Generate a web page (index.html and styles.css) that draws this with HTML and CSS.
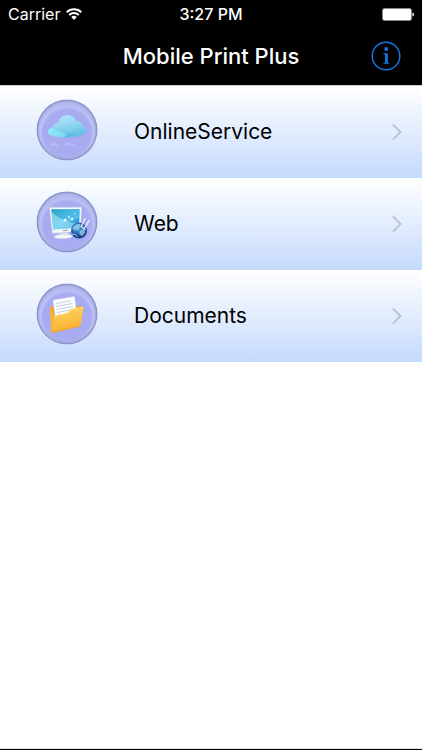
FILE: index.html
```html
<!DOCTYPE html>
<html lang="en">
<head>
<meta charset="utf-8">
<meta name="viewport" content="width=device-width, initial-scale=1">
<title>Mobile Print Plus</title>
<link rel="stylesheet" href="styles.css">
</head>
<body>
<header class="header">
  <div class="status">
    <span class="carrier">Carrier
      <svg class="wifi" width="16" height="12" viewBox="0 0 16 12" aria-hidden="true">
        <g fill="none" stroke="#fff" stroke-width="1.9">
          <path d="M.7 4.3a10.4 10.4 0 0 1 14.6 0"/>
          <path d="M3.2 7a6.8 6.8 0 0 1 9.6 0"/>
        </g>
        <path d="M8 12 5.2 9.1a4 4 0 0 1 5.6 0z" fill="#fff"/>
      </svg>
    </span>
    <time class="clock">3:27 PM</time>
    <svg class="battery" width="32" height="13" viewBox="0 0 32 13" role="img" aria-label="Battery full">
      <rect x=".5" y=".5" width="29" height="12" rx="2" fill="#fff" stroke="#888"/>
      <path d="M30.5 4.5c2 .5 2 3.500 0 4z" fill="#fff"/>
    </svg>
  </div>
  <div class="navbar">
    <h1 class="title">Mobile Print Plus</h1>
    <button class="info" type="button" aria-label="Information">
      <svg width="30" height="30" viewBox="0 0 30 30" aria-hidden="true">
        <circle cx="15" cy="15" r="13.800" fill="none" stroke="#1677e6" stroke-width="1.400"/>
        <circle cx="15.200" cy="8" r="1.900" fill="#1677e6"/>
        <path d="M12.300 12.200h4.500v9.200l1.500.5v.9h-6v-.9l1.800-.5v-7.800l-1.800-.5z" fill="#1677e6"/>
      </svg>
    </button>
  </div>
</header>

<svg class="defs" width="0" height="0" aria-hidden="true">
  <defs>
    <radialGradient id="rim">
      <stop offset=".8" stop-color="#a8abf0"/>
      <stop offset=".87" stop-color="#abb0ee"/>
      <stop offset=".93" stop-color="#9da4df"/>
      <stop offset=".98" stop-color="#8991c8"/>
      <stop offset="1" stop-color="#a3add6"/>
    </radialGradient>
    <radialGradient id="sheen" cy=".56">
      <stop offset=".82" stop-color="#d8e2fd" stop-opacity="0"/>
      <stop offset=".93" stop-color="#d8e2fd" stop-opacity=".4"/>
      <stop offset="1" stop-color="#d8e2fd" stop-opacity=".2"/>
    </radialGradient>
    <linearGradient id="cloud" x2=".3" y2="1">
      <stop offset="0" stop-color="#b8e6fa"/>
      <stop offset=".5" stop-color="#94d9f4"/>
      <stop offset="1" stop-color="#63bee5"/>
    </linearGradient>
    <linearGradient id="cloud-lit">
      <stop offset="0" stop-color="#8cecfa"/>
      <stop offset="1" stop-color="#7bcff0"/>
    </linearGradient>
    <linearGradient id="screen" x2="1" y2="1">
      <stop offset="0" stop-color="#2b9fbd"/>
      <stop offset=".5" stop-color="#4dbce8"/>
      <stop offset="1" stop-color="#1683d4"/>
    </linearGradient>
    <radialGradient id="globe" cx=".4" cy=".35">
      <stop offset="0" stop-color="#a5dcf7"/>
      <stop offset=".4" stop-color="#3d8bcd"/>
      <stop offset="1" stop-color="#153f88"/>
    </radialGradient>
    <linearGradient id="folder" x2=".3" y2="1">
      <stop offset="0" stop-color="#ffd866"/>
      <stop offset=".55" stop-color="#fdc248"/>
      <stop offset="1" stop-color="#f8ae30"/>
    </linearGradient>
    <g id="orb">
      <circle cx="31" cy="31" r="30.500" fill="url(#rim)"/>
      <circle cx="31" cy="31" r="29" fill="url(#sheen)"/>
    </g>
  </defs>
</svg>

<main class="content">
  <nav class="menu" aria-label="Print sources">
    <a class="row" href="#online">
      <svg class="icon" width="62" height="62" viewBox="0 0 62 62" aria-hidden="true">
        <use href="#orb"/>
        <path d="M18 36.500c-3.500.4-6.300-1.400-6-4 .2-2.300 2.500-3.400 4.500-3.400-.2-3.500 3-5.800 6-5 .4-4.500 4-8 8.800-8 4.600 0 7.600 2.600 8.500 6.200 4-.8 7.200 1.700 7 5.200 2.700.5 4 2.500 3.400 4.800-.6 2.600-3.500 3.700-6.500 3.200-2 2.200-5.500 3.200-8.300 1.600-3.300 2.600-9 3-11.700.4-2 .6-4.500.3-5.700-1z" fill="url(#cloud)"/>
        <path d="M12 32.500c.2-2.300 2.500-3.400 4.500-3.400 3 1 4.500 3 7.500 3.300 2.400.2 4 1.600 5.500 3.300l4.500-1-5 3.500c-1.800.7-3.900.6-5.300-.7-2 .6-4.500.3-5.700-1-3.500.4-6.300-1.400-6-4z" fill="url(#cloud-lit)"/>
        <path d="m29 38 3.500-6 .5 4 5-3-2 3.500 5 .8c-2 .4-3.500.3-5.300-.2-2 .9-4 1.500-6.700.9z" fill="#58b1dc" opacity=".55"/>
        <path d="M14 46c2-2.600 5-2.600 7-.5 2 .3 2 1.300 0 1.500h-6c-1 0-1.500-.3-1-1zM28 45.500c3-2.700 6-2.500 8-.4 3-.5 3.500 1 1.500 1.500H29c-1.800 0-2-.6-1-1.100z" fill="#b4bdf6"/>
      </svg>
      <span class="label">OnlineService</span>
      <svg class="chevron" width="12" height="18" viewBox="0 0 12 18" aria-hidden="true"><path d="m2 1.500 7.500 7.500L2 16.500"/></svg>
    </a>
    <a class="row" href="#web">
      <svg class="icon" width="62" height="62" viewBox="0 0 62 62" aria-hidden="true">
        <use href="#orb"/>
        <path d="m13.500 16.500 32-.2-1 23.700-28 2.300z" fill="#f5f9fc" stroke="#d0d9e7" stroke-width=".6"/>
        <path d="m15.200 18.200 28.600-.1-.8 18.400-25.800 2z" fill="url(#screen)"/>
        <path d="M15.500 20.500c8 8 17 11.500 27.900 12l-.4 4-25.800 2z" fill="#bcf1fa" opacity=".5"/>
        <path d="M17 34c9-2 18-7 26.500-11v3c-9 4-17 8-26.300 10z" fill="#78dcf4" opacity=".5"/>
        <g fill="#edffff"><circle cx="29" cy="29" r="1.500"/><circle cx="33" cy="26" r=".9"/><circle cx="36" cy="28" r="1.200"/><circle cx="39" cy="23" r=".7"/></g>
        <path d="m24 42 8-.5 1 3.500h-9z" fill="#dce4ec"/>
        <path d="M18 45.500c2-2.500 17-3 18.500-.4 1 3-20 3.800-18.500.4z" fill="#f4f7fb" stroke="#bec8da" stroke-width=".5"/>
        <path d="m27 39.500 5-.4" stroke="#8797ad"/>
        <circle cx="43" cy="39.500" r="8" fill="url(#globe)"/>
        <path d="M36.500 37c2-3.500 5-4.500 8-4l-1 3-4 1-1.500 3zM43.500 40l4-2 2 3-3 4-3-1z" fill="#9bd4ed" opacity=".75"/>
        <path d="m35.500 43 4 .5 2 2.500" fill="none" stroke="#9bd0ef"/>
        <path d="m45.500 35 4-8M48.500 37l5-8M44.500 35l5 4" fill="none" stroke="#dfe7fa" stroke-width="1.500"/>
        <path d="m47 35 4-7" stroke="#8293bd" stroke-width=".6"/>
      </svg>
      <span class="label">Web</span>
      <svg class="chevron" width="12" height="18" viewBox="0 0 12 18" aria-hidden="true"><path d="m2 1.500 7.500 7.500L2 16.500"/></svg>
    </a>
    <a class="row" href="#documents">
      <svg class="icon" width="62" height="62" viewBox="0 0 62 62" aria-hidden="true">
        <use href="#orb"/>
        <path d="m14 24 6-2 3 2 22-1 2.500 2-5 19-27 5z" fill="#eda632"/>
        <path d="m17 17 21.500-3.500L41 34l-21 5z" fill="#fbfdff" stroke="#ced6e7" stroke-width=".5"/>
        <path d="m20 20.500 15-2.700M20 23.500l16.500-3M20.500 26.500l16.500-3M21 29.500l16-3" stroke="#b5c1d0" stroke-width=".8"/>
        <path d="m18 33 13.500-3 4-4 12-1.500-3 18.500-29 7z" fill="url(#folder)"/>
        <path d="m18 33 13.500-3 4-4 11.800-1.500" fill="none" stroke="#ffe28a" stroke-width=".9"/>
        <path d="m16 49.500 28.500-6.700" stroke="#eaa02b" stroke-width=".9"/>
        <path d="m14 24.500 1 24 .8 1.500 2.400-17z" fill="#f6b43c"/>
      </svg>
      <span class="label">Documents</span>
      <svg class="chevron" width="12" height="18" viewBox="0 0 12 18" aria-hidden="true"><path d="m2 1.500 7.500 7.500L2 16.500"/></svg>
    </a>
  </nav>
</main>
</body>
</html>
```
FILE: styles.css
```css
* {
  box-sizing: border-box;
}

body {
  display: flex;
  flex-direction: column;
  min-height: 100vh;
  margin: 0;
  background: #fff;
  color: #000;
  font-family: Inter, "Liberation Sans", sans-serif;
  border-bottom: 1px solid #000;
}

.header {
  background: #000;
  color: #fff;
}

.status {
  display: grid;
  grid-template-columns: 1fr auto 1fr;
  align-items: center;
  height: 28px;
  padding: 0 8px;
  font-size: 16px;
  line-height: 28px;
}

.carrier {
  display: flex;
  align-items: center;
  gap: 6px;
}

.clock {
  font-weight: 500;
}

.battery {
  justify-self: end;
}

.navbar {
  display: grid;
  grid-template-columns: 1fr auto 1fr;
  align-items: center;
  height: 57px;
  padding: 0 21px 2px;
}

.title {
  grid-column: 2;
  margin: 0;
  font-size: 22px;
  font-weight: 500;
  line-height: 28px;
}

.info {
  justify-self: end;
  width: 30px;
  height: 30px;
  padding: 0;
  border: 0;
  background: none;
}

.info svg {
  display: block;
}

.defs {
  position: absolute;
}

.content {
  flex: 1;
  border-top: 1px solid #d0cfd2;
  border-bottom: 1px solid #e4e4e4;
}

.row {
  display: flex;
  align-items: center;
  height: 92px;
  padding: 0 19px 0 36px;
  background: linear-gradient(#fff, #c5dafd);
  color: inherit;
  text-decoration: none;
}

.icon {
  flex: none;
  margin-bottom: 4px;
}

.label {
  flex: 1;
  margin-left: 36px;
  font-size: 21px;
  line-height: 28px;
}

.chevron {
  flex: none;
  fill: none;
  stroke: #c0c3ca;
  stroke-width: 2;
}
```
